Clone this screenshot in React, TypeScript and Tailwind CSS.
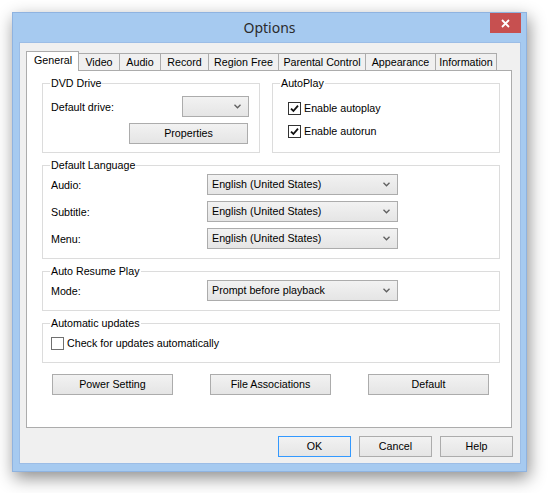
import React from "react";

const Chevron = () => (
  <svg width="7" height="5" viewBox="0 0 7 5" className="text-[#5f5f5f] shrink-0">
    <path d="M0.5 0.8 L3.5 3.8 L6.5 0.8" fill="none" stroke="currentColor" strokeWidth="1.3" />
  </svg>
);

const Combo = ({ value, className }: { value?: string; className: string }) => (
  <div
    className={`flex items-center h-[21px] border border-[#acacac] bg-linear-to-b from-[#f2f2f2] to-[#e5e5e5] pl-[4px] pr-[7px] ${className}`}
  >
    <span className="flex-1 truncate leading-[19px]">{value}</span>
    <Chevron />
  </div>
);

const Button = ({ label, className }: { label: string; className: string }) => (
  <button
    type="button"
    className={`flex items-center justify-center border bg-linear-to-b from-[#f2f2f2] to-[#e5e5e5] text-black ${className}`}
  >
    {label}
  </button>
);

const CheckBox = ({ label, checked, className }: { label: string; checked?: boolean; className?: string }) => (
  <div className={`flex items-center h-[13px] ${className ?? ""}`}>
    <div
      className={`w-[13px] h-[13px] bg-white border flex items-center justify-center shrink-0 ${
        checked ? "border-[#333333]" : "border-[#707070]"
      }`}
    >
      {checked && (
        <svg width="9" height="9" viewBox="0 0 9 9">
          <path d="M1 4.6 L3.4 7 L8 1.6" fill="none" stroke="#111111" strokeWidth="1.8" />
        </svg>
      )}
    </div>
    <span className="ml-[3px] leading-[13px] whitespace-nowrap">{label}</span>
  </div>
);

const Group = ({
  title,
  className,
  children,
}: {
  title: string;
  className: string;
  children?: React.ReactNode;
}) => (
  <div className={`relative border border-[#dcdcdc] shrink-0 ${className}`}>
    <span className="absolute -top-[8px] left-[7px] bg-white px-[1px] leading-[14px] whitespace-nowrap">{title}</span>
    {children}
  </div>
);

const tabs = [
  { name: "General", w: "w-[53px]" },
  { name: "Video", w: "w-[42px]" },
  { name: "Audio", w: "w-[42px]" },
  { name: "Record", w: "w-[49px]" },
  { name: "Region Free", w: "w-[71px]" },
  { name: "Parental Control", w: "w-[88px]" },
  { name: "Appearance", w: "w-[71px]" },
  { name: "Information", w: "w-[62px]" },
];

const LangRow = ({ label }: { label: string }) => (
  <div className="flex items-center h-[21px]">
    <span className="w-[156px] leading-[14px]">{label}</span>
    <Combo value="English (United States)" className="w-[191px]" />
  </div>
);

export default function App() {
  return (
    <div className="w-[548px] h-[493px] bg-white pt-[12px] pl-[12px] font-['Liberation_Sans',Arial,sans-serif] text-[10.7px] text-black overflow-hidden">
      <div className="w-[515px] h-[460px] border border-[#8fb3e0] bg-[#a6caf0] flex flex-col shadow-[2px_6px_16px_rgba(0,0,0,0.45)]">
        {/* title bar */}
        <div className="relative h-[29px] flex items-center justify-center shrink-0">
          <span className="font-['Noto_Sans',sans-serif] text-[14px] text-[#2b2b2b] leading-none pt-[1px]">Options</span>
          <div className="absolute right-[5px] top-0 w-[31px] h-[20px] bg-[#c75050] flex items-center justify-center">
            <svg width="9" height="9" viewBox="0 0 9 9">
              <path d="M1 1 L8 8 M8 1 L1 8" stroke="#ffffff" strokeWidth="1.8" />
            </svg>
          </div>
        </div>

        {/* client area */}
        <div className="ml-[6px] w-[502px] h-[422px] bg-[#f0f0f0] border border-[#9cbde6] flex flex-col pl-[6px] pt-[8px]">
          {/* tab strip */}
          <div className="relative z-10 flex items-end h-[20px] -mb-px">
            {tabs.map((t, i) =>
              i === 0 ? (
                <div
                  key={t.name}
                  className={`relative z-10 ${t.w} h-[20px] bg-white border border-b-0 border-[#acacac] flex items-center pl-[7px] pb-[2px]`}
                >
                  {t.name}
                </div>
              ) : (
                <div
                  key={t.name}
                  className={`${t.w} h-[17px] mb-px -ml-px bg-[#f0f0f0] border border-b-0 border-[#acacac] flex items-center justify-center`}
                >
                  {t.name}
                </div>
              )
            )}
          </div>

          {/* tab panel */}
          <div className="w-[486px] h-[358px] bg-white border border-[#acacac] pl-[15px] pt-[12px] flex flex-col">
            <div className="flex gap-[12px]">
              <Group title="DVD Drive" className="w-[218px] h-[70px] pt-[12px] pl-[8px] pr-[10px] flex flex-col">
                <div className="flex items-center">
                  <span className="leading-[14px]">Default drive:</span>
                  <Combo className="ml-auto w-[67px]" />
                </div>
                <Button label="Properties" className="self-end mr-[1px] mt-[6px] w-[119px] h-[21px] border-[#acacac]" />
              </Group>
              <Group title="AutoPlay" className="w-[228px] h-[70px] pt-[18px] pl-[15px] flex flex-col gap-[10px]">
                <CheckBox label="Enable autoplay" checked />
                <CheckBox label="Enable autorun" checked />
              </Group>
            </div>

            <Group title="Default Language" className="mt-[12px] w-[458px] h-[94px] pt-[8px] pl-[8px] flex flex-col gap-[6px]">
              <LangRow label="Audio:" />
              <LangRow label="Subtitle:" />
              <LangRow label="Menu:" />
            </Group>

            <Group title="Auto Resume Play" className="mt-[12px] w-[458px] h-[40px] pt-[8px] pl-[8px]">
              <div className="flex items-center h-[21px]">
                <span className="w-[156px] leading-[14px]">Mode:</span>
                <Combo value="Prompt before playback" className="w-[191px]" />
              </div>
            </Group>

            <Group title="Automatic updates" className="mt-[12px] w-[458px] h-[40px] pt-[13px] pl-[8px]">
              <CheckBox label="Check for updates automatically" />
            </Group>

            <div className="mt-[11px] ml-[10px] flex gap-[37px]">
              <Button label="Power Setting" className="w-[121px] h-[21px] border-[#acacac]" />
              <Button label="File Associations" className="w-[121px] h-[21px] border-[#acacac]" />
              <Button label="Default" className="w-[121px] h-[21px] border-[#acacac]" />
            </div>
          </div>

          {/* dialog buttons */}
          <div className="mt-[8px] flex justify-end gap-[8px] pr-[7px]">
            <Button label="OK" className="w-[73px] h-[21px] border-[#3399ff]" />
            <Button label="Cancel" className="w-[73px] h-[21px] border-[#acacac]" />
            <Button label="Help" className="w-[73px] h-[21px] border-[#acacac]" />
          </div>
        </div>
      </div>
    </div>
  );
}
